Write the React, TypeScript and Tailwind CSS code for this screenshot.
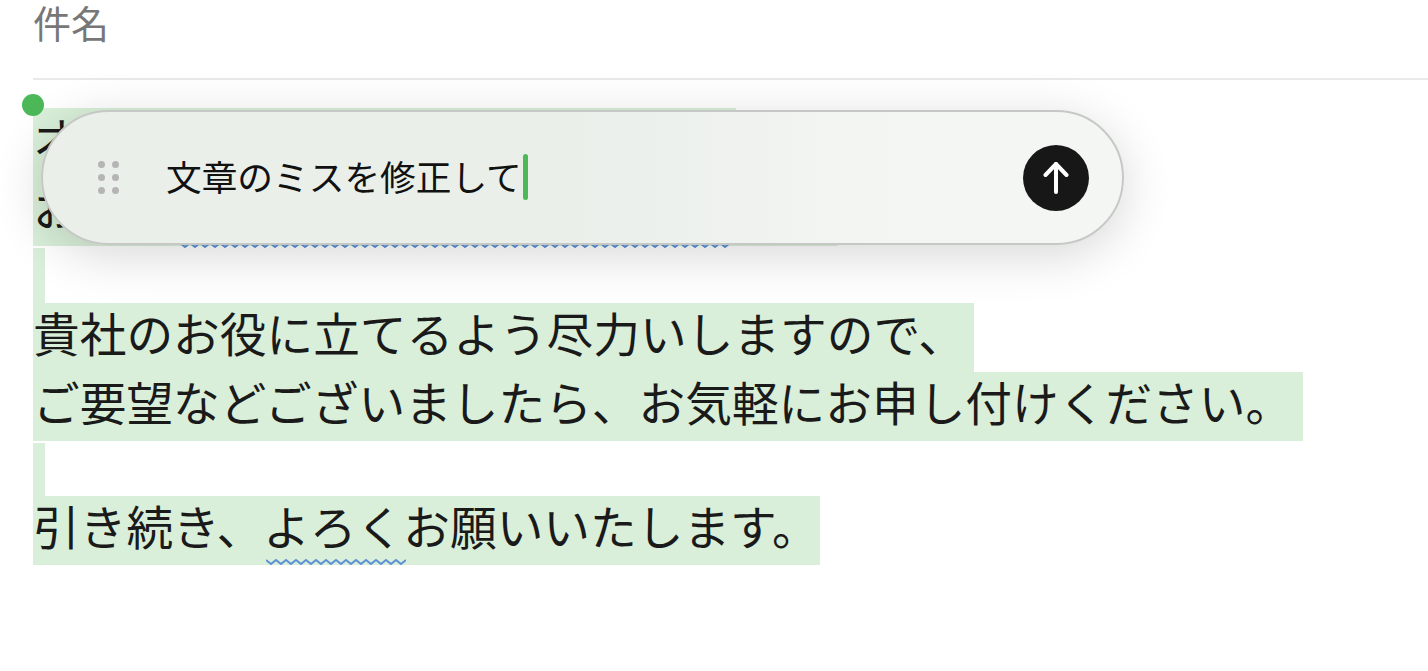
function Wave({ w }: { w: number }) {
  return (
    <svg width={w} height={8} viewBox={`0 0 ${w} 8`} className="block">
      <polyline
        fill="none"
        stroke="#5b90d6"
        strokeWidth="2"
        points={Array.from({ length: Math.floor(w / 5) + 1 }, (_, i) => `${i * 5},${i % 2 ? 6 : 2}`).join(" ")}
      />
    </svg>
  );
}

export default function App() {
  const line = "h-[69px] bg-[#d9efd9] leading-[58px] whitespace-nowrap";
  return (
    <div
      className="relative h-[671px] w-[1428px] overflow-hidden bg-white text-[#1a1a1a]"
      style={{ fontFamily: '"Noto Sans CJK JP", sans-serif' }}
    >
      <div className="ml-[33px] h-[80px] border-b-2 border-[#e9e9e9]">
        <div className="text-[38px] leading-[44px] text-[#777777]">件名</div>
      </div>

      <div className="ml-[33px] mt-[28px] text-[46.7px]">
        <div className={`${line} w-[703px]`}>オ</div>
        <div className={`${line} flex w-[805px] justify-between`}>
          <span>お</span>
          <span className="mr-[108px] -mb-[3px] self-end">
            <Wave w={550} />
          </span>
        </div>
        <div className="mt-[2px] h-[55px] w-[12px] bg-[#d9efd9]" />
        <div className={`${line} w-[941px]`}>貴社のお役に立てるよう尽力いしますので、</div>
        <div className={`${line} w-[1270px]`}>ご要望などございましたら、お気軽にお申し付けください。</div>
        <div className="mt-[2px] h-[53px] w-[12px] bg-[#d9efd9]" />
        <div className={`${line} w-[787px]`}>
          引き続き、
          <span className="relative inline-block">
            よろく
            <span className="absolute left-[3px] -bottom-[12px]">
              <Wave w={140} />
            </span>
          </span>
          お願いいたします。
        </div>
      </div>

      <div className="absolute left-[22px] top-[94px] h-[22px] w-[22px] rounded-full bg-[#4cb858]" />

      <div className="absolute left-[41px] top-[110px] flex h-[135px] w-[1083px] items-center rounded-full border-2 border-[#c6c8c6] bg-gradient-to-r from-[#eaefea] from-50% to-[#f4f6f4] to-80% shadow-[0_10px_50px_rgba(0,0,0,0.16)]">
        <div className="ml-[55px] grid grid-cols-2 gap-x-[7px] gap-y-[6px]">
          {[0, 1, 2, 3, 4, 5].map((i) => (
            <span key={i} className="h-[7px] w-[7px] rounded-full bg-[#b4b5b4]" />
          ))}
        </div>
        <div className="ml-[47px] flex items-center pb-[2px]">
          <span className="pb-[2px] text-[35.7px] leading-[46px] whitespace-nowrap text-[#111111]">文章のミスを修正して</span>
          <span className="ml-px h-[46px] w-[5px] rounded-full bg-[#4cb858]" />
        </div>
        <button className="ml-auto mr-[33px] flex h-[66px] w-[66px] items-center justify-center rounded-full bg-[#171717]">
          <svg width="26" height="32" viewBox="0 0 26 32" fill="none" stroke="#ffffff" strokeWidth="4" strokeLinecap="round" strokeLinejoin="round">
            <path d="M13 30V2" />
            <path d="M2.5 13L13 2L23.5 13" />
          </svg>
        </button>
      </div>
    </div>
  );
}
